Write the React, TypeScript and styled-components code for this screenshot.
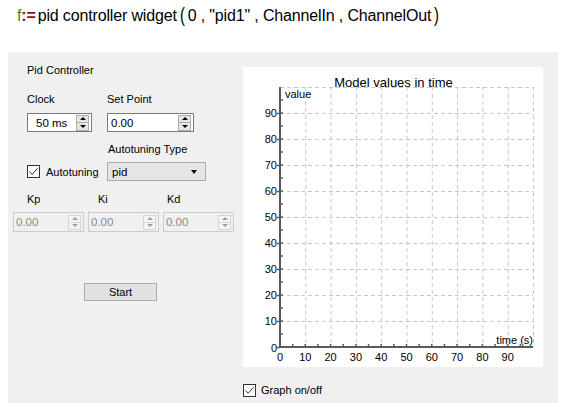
import React from "react";
import styled, { createGlobalStyle } from "styled-components";

const GlobalStyle = createGlobalStyle`
  html, body {
    margin: 0;
    padding: 0;
    background: #ffffff;
    overflow: hidden;
  }
  body {
    font-family: "Liberation Sans", Arial, sans-serif;
  }
`;

const Page = styled.div`
  width: 569px;
  height: 403px;
  overflow: hidden;
`;

const Header = styled.div`
  height: 52px;
  box-sizing: border-box;
  padding: 5px 0 0 17px;
  font-size: 16px;
  line-height: 20px;
  color: #000;
  white-space: nowrap;
  letter-spacing: -0.15px;
`;

const FName = styled.span`
  color: #3a8a3a;
`;

const Assign = styled.span`
  color: #8b1010;
  font-weight: bold;
  margin-right: 2px;
`;

const Paren = styled.span`
  display: inline-block;
  font-size: 21px;
  transform: scaleX(0.7);
  vertical-align: -1px;
  margin: 0 2px;
`;

const Panel = styled.div`
  margin-left: 8px;
  width: 550px;
  height: 360px;
  background: #f0f0f0;
  display: flex;
  font-size: 11px;
  color: #000;
`;

const LeftCol = styled.div`
  width: 235px;
  display: flex;
  flex-direction: column;
  padding-top: 11px;
  box-sizing: border-box;
`;

const RightCol = styled.div`
  display: flex;
  flex-direction: column;
  padding-top: 15px;
`;

const Caption = styled.div<{ $mt?: number; $ml?: number }>`
  line-height: 14px;
  height: 14px;
  margin-top: ${(p) => p.$mt ?? 0}px;
  margin-left: ${(p) => p.$ml ?? 19}px;
`;

const TwoCols = styled.div<{ $mt: number }>`
  display: grid;
  grid-template-columns: 80px 100px;
  margin-left: 19px;
  margin-top: ${(p) => p.$mt}px;
  align-items: center;
`;

const ThreeCols = styled.div<{ $mt: number }>`
  display: flex;
  margin-top: ${(p) => p.$mt}px;
`;

const LabelCell = styled.div<{ $w: number; $pl?: number }>`
  width: ${(p) => p.$w}px;
  padding-left: ${(p) => p.$pl ?? 0}px;
  box-sizing: border-box;
  line-height: 14px;
`;

const SpinBox = styled.div<{ $w: number; $h: number; $disabled?: boolean; $ml?: number }>`
  width: ${(p) => p.$w}px;
  height: ${(p) => p.$h}px;
  margin-left: ${(p) => p.$ml ?? 0}px;
  box-sizing: border-box;
  border: 1px solid ${(p) => (p.$disabled ? "#cccccc" : "#7a7a7a")};
  background: ${(p) => (p.$disabled ? "#f0f0f0" : "#ffffff")};
  display: flex;
  align-items: center;
  padding-right: 2px;
`;

const SpinValue = styled.div<{ $pl: number; $disabled?: boolean }>`
  flex: 1;
  padding-left: ${(p) => p.$pl}px;
  color: ${(p) => (p.$disabled ? "#8a8a8a" : "#000")};
  font-size: 11.5px;
`;

const SpinButtons = styled.div<{ $disabled?: boolean }>`
  width: 13px;
  height: ${(p) => (p.$disabled ? 15 : 16)}px;
  box-sizing: border-box;
  border: 1px solid ${(p) => (p.$disabled ? "#d6d6d6" : "#adadad")};
  background: ${(p) => (p.$disabled ? "#f4f4f4" : "#e6e6e6")};
  display: flex;
  flex-direction: column;
`;

const SpinHalf = styled.div<{ $down?: boolean; $disabled?: boolean }>`
  flex: 1;
  display: flex;
  align-items: center;
  justify-content: center;
  border-top: ${(p) => (p.$down ? `1px solid ${p.$disabled ? "#d6d6d6" : "#adadad"}` : "none")};
  &::after {
    content: "";
    width: 0;
    height: 0;
    border-left: 3px solid transparent;
    border-right: 3px solid transparent;
    ${(p) =>
      p.$down
        ? `border-top: 3px solid ${p.$disabled ? "#a0a0a0" : "#000"};`
        : `border-bottom: 3px solid ${p.$disabled ? "#a0a0a0" : "#000"};`}
  }
`;

const CheckRow = styled.label<{ $gap: number }>`
  display: flex;
  align-items: center;
  gap: ${(p) => p.$gap}px;
  font-size: 11px;
  line-height: 14px;
`;

const CheckBox = styled.span`
  width: 13px;
  height: 13px;
  box-sizing: border-box;
  border: 1px solid #333333;
  background: #ffffff;
  display: flex;
  align-items: center;
  justify-content: center;
`;

const Combo = styled.div`
  width: 99px;
  height: 19px;
  box-sizing: border-box;
  border: 1px solid #adadad;
  background: #e5e5e5;
  display: flex;
  align-items: center;
  justify-content: space-between;
  padding: 0 8px 0 4px;
  font-size: 11.5px;
  &::after {
    content: "";
    width: 0;
    height: 0;
    border-left: 3.5px solid transparent;
    border-right: 3.5px solid transparent;
    border-top: 4px solid #000;
  }
`;

const Button = styled.div`
  width: 73px;
  height: 18px;
  margin: 51px 0 0 76px;
  box-sizing: border-box;
  border: 1px solid #adadad;
  background: #e1e1e1;
  display: flex;
  align-items: center;
  justify-content: center;
  font-size: 11px;
`;

const ChartCard = styled.div`
  width: 300px;
  height: 300px;
  background: #ffffff;
`;

const GraphToggle = styled.div`
  margin-top: 16px;
`;

const Check = () => (
  <CheckBox>
    <svg width="11" height="11" viewBox="0 0 11 11">
      <polyline points="1.5,5.5 4.2,8.3 9.6,2.2" fill="none" stroke="#333" strokeWidth="1" />
    </svg>
  </CheckBox>
);

interface SpinProps {
  value: string;
  width: number;
  height: number;
  pad: number;
  disabled?: boolean;
  ml?: number;
}

function Spin({ value, width, height, pad, disabled, ml }: SpinProps) {
  return (
    <SpinBox $w={width} $h={height} $disabled={disabled} $ml={ml}>
      <SpinValue $pl={pad} $disabled={disabled}>
        {value}
      </SpinValue>
      <SpinButtons $disabled={disabled}>
        <SpinHalf $disabled={disabled} />
        <SpinHalf $down $disabled={disabled} />
      </SpinButtons>
    </SpinBox>
  );
}

const X0 = 37;
const Y0 = 280;
const SX = 2.53;
const SY = 2.6;
const px = (v: number) => X0 + v * SX;
const py = (v: number) => Y0 - v * SY;
const tens = [10, 20, 30, 40, 50, 60, 70, 80, 90, 100];
const fives = Array.from({ length: 19 }, (_, i) => (i + 1) * 5);
const labels = [0, 10, 20, 30, 40, 50, 60, 70, 80, 90];

function Chart() {
  const axis = "#5a5a5a";
  return (
    <svg width="300" height="300" fontFamily='"Liberation Sans", Arial, sans-serif'>
      {tens.map((v) => (
        <g key={v} stroke="#c8c8c8" strokeWidth="1" strokeDasharray="4 3">
          <line x1={px(v) + 0.5} y1={py(100)} x2={px(v) + 0.5} y2={Y0} />
          <line x1={X0} y1={py(v) + 0.5} x2={px(100)} y2={py(v) + 0.5} />
        </g>
      ))}
      {fives.map((v) => (
        <g key={v} stroke={axis} strokeWidth="1.5">
          <line x1={X0} y1={py(v)} x2={X0 + 3} y2={py(v)} />
          <line x1={px(v)} y1={Y0} x2={px(v)} y2={Y0 - 3} />
        </g>
      ))}
      {labels.map((v) => (
        <g key={v}>
          <line x1={X0 - 3} y1={py(v) + 0.5} x2={X0} y2={py(v) + 0.5} stroke={axis} strokeWidth="1.5" />
          <text x={X0 - 3} y={v === 0 ? Y0 + 5 : py(v) + 4} fontSize="11" textAnchor="end" fill="#000">
            {v}
          </text>
          <text x={px(v)} y={Y0 + 14} fontSize="11" textAnchor="middle" fill="#000">
            {v}
          </text>
        </g>
      ))}
      <line x1={X0} y1={py(100)} x2={X0} y2={Y0 + 1} stroke={axis} strokeWidth="2" />
      <line x1={X0} y1={Y0} x2={px(100)} y2={Y0} stroke={axis} strokeWidth="2" />
      <text x="150.5" y="19.5" fontSize="13" textAnchor="middle" fill="#000">
        Model values in time
      </text>
      <text x="42" y="31" fontSize="11" fill="#000">
        value
      </text>
      <text x={px(100)} y={Y0 - 3} fontSize="11" textAnchor="end" fill="#000">
        time (s)
      </text>
    </svg>
  );
}

export default function App() {
  return (
    <Page>
      <GlobalStyle />
      <Header>
        <FName>f</FName>
        <Assign>:=</Assign>
        pid controller widget<Paren>(</Paren>0 , "pid1" , ChannelIn , ChannelOut<Paren>)</Paren>
      </Header>
      <Panel>
        <LeftCol>
          <Caption>Pid Controller</Caption>
          <TwoCols $mt={15}>
            <LabelCell $w={80}>Clock</LabelCell>
            <LabelCell $w={100}>Set Point</LabelCell>
          </TwoCols>
          <TwoCols $mt={7}>
            <Spin value="50 ms" width={65} height={19} pad={8} />
            <Spin value="0.00" width={87} height={19} pad={3} />
          </TwoCols>
          <Caption $mt={10} $ml={100}>
            Autotuning Type
          </Caption>
          <TwoCols $mt={6}>
            <CheckRow $gap={6}>
              <Check />
              Autotuning
            </CheckRow>
            <Combo>pid</Combo>
          </TwoCols>
          <ThreeCols $mt={11}>
            <LabelCell $w={90} $pl={19}>
              Kp
            </LabelCell>
            <LabelCell $w={69}>Ki</LabelCell>
            <LabelCell $w={60}>Kd</LabelCell>
          </ThreeCols>
          <ThreeCols $mt={6}>
            <Spin value="0.00" width={71} height={20} pad={2} disabled ml={5} />
            <Spin value="0.00" width={71} height={20} pad={2} disabled ml={4} />
            <Spin value="0.00" width={71} height={20} pad={2} disabled ml={4} />
          </ThreeCols>
          <Button>Start</Button>
        </LeftCol>
        <RightCol>
          <ChartCard>
            <Chart />
          </ChartCard>
          <GraphToggle>
            <CheckRow $gap={5}>
              <Check />
              Graph on/off
            </CheckRow>
          </GraphToggle>
        </RightCol>
      </Panel>
    </Page>
  );
}
